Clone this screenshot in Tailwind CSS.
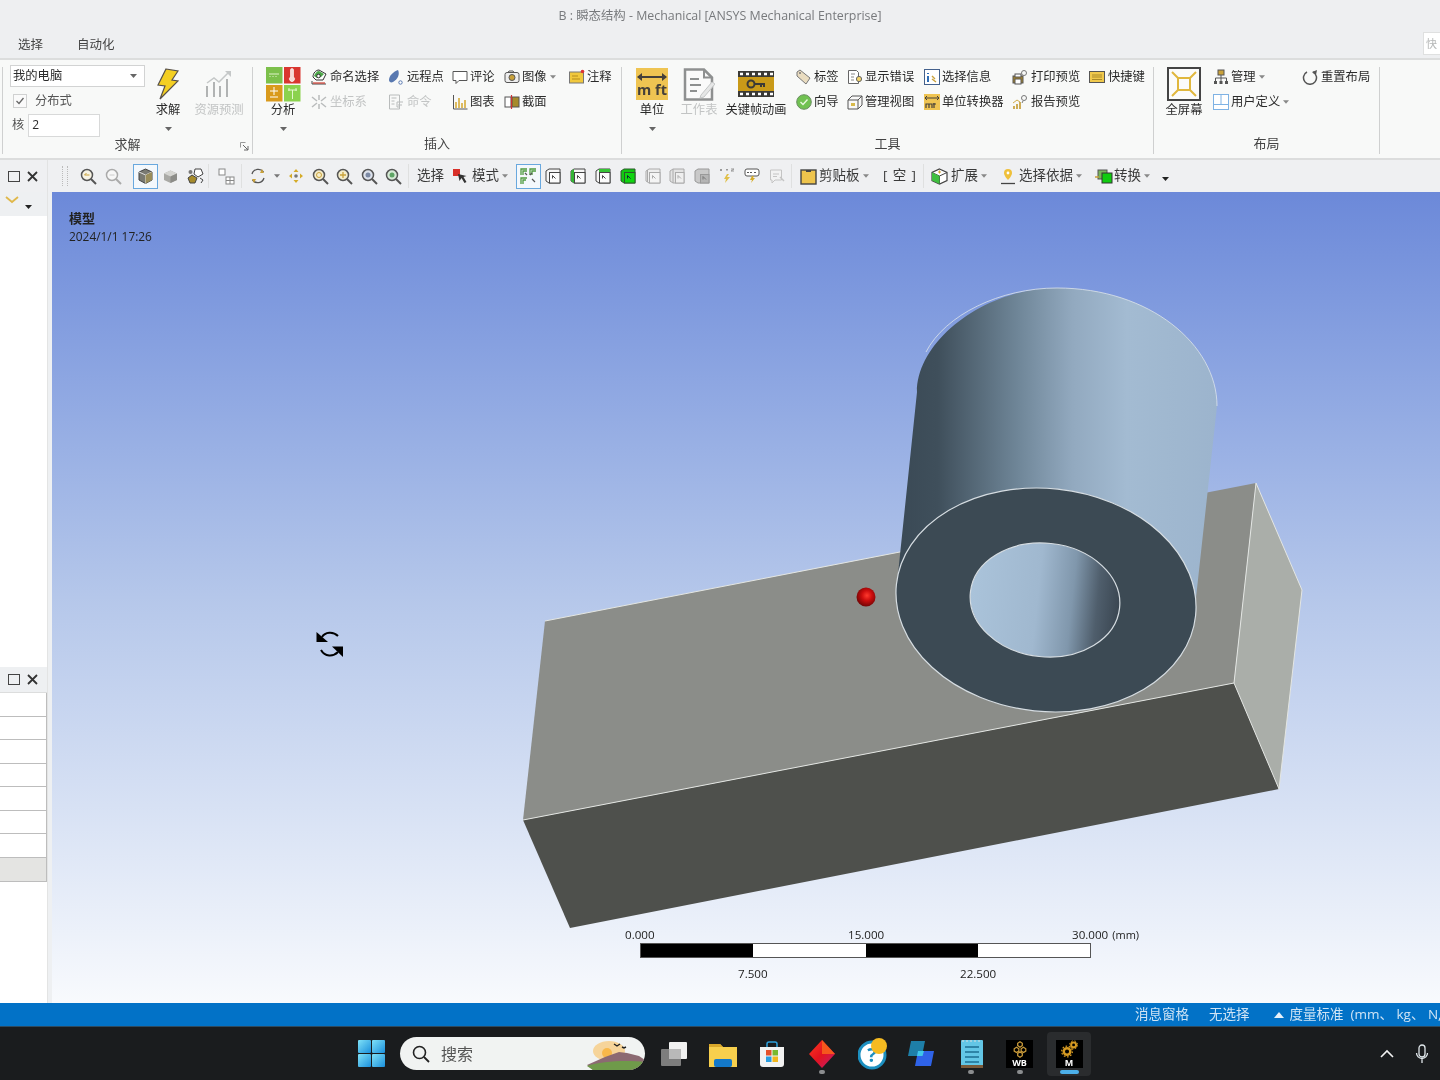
<!DOCTYPE html>
<html lang="zh-CN">
<head>
<meta charset="UTF-8">
<title>B : 瞬态结构 - Mechanical</title>
<script src="https://cdn.jsdelivr.net/npm/@tailwindcss/browser@4"></script>
</head>
<body class="bg-white">
<div class="w-[1440px] h-[1080px] overflow-hidden flex flex-col bg-[#eeeff1] text-[#2b2b2b] blur-[0.35px] font-['Open_Sans','Noto_Sans_CJK_SC',sans-serif]">

  <!-- title bar -->
  <div class="h-[32px] flex items-center justify-center text-[12.4px] text-[#77797c]">B : 瞬态结构 - Mechanical [ANSYS Mechanical Enterprise]</div>

  <!-- tabs -->
  <div class="h-[28px] flex items-center border-b-2 border-[#dcdddd] text-[12.5px] text-[#444]">
    <span class="ml-[18px] w-[26px] whitespace-nowrap">选择</span>
    <span class="ml-[33px] w-[37px] whitespace-nowrap">自动化</span>
    <div class="ml-auto self-start w-[17px] h-[23px] bg-white border border-[#dfe0e0] border-r-0 text-[11px] text-[#b5b7b7] pl-[2px] leading-[22px] overflow-hidden">快</div>
  </div>

  <!-- ribbon -->
  <div class="h-[100px] pt-[7px] bg-[#f8f9f8] border-b-2 border-[#dcdddd] flex text-[12.3px] leading-none">

    <!-- 求解 -->
    <div class="relative ml-[2px] w-[251px] h-[87px] border-x border-[#cfd0d0] flex flex-col justify-between">
      <div class="flex">
        <div class="ml-[7px] w-[135px] flex flex-col">
          <div class="h-[22px] -mt-[2px] bg-white border border-[#d2d3d3] flex items-center pl-[2px]">
            <span class="whitespace-nowrap">我的电脑</span>
            <svg class="ml-auto mr-[7px] w-[7px] h-[4px]" viewBox="0 0 7 4"><path d="M0 0h7L3.500 4z" fill="#666"/></svg>
          </div>
          <div class="mt-[4px] h-[20px] flex items-center pl-[3px]">
            <div class="w-[14px] h-[14px] border border-[#d0d1d1] bg-[#fafafa] flex items-center justify-center">
              <svg class="w-[10px] h-[10px]" viewBox="0 0 10 10"><path d="M1.500 5l2.500 2.500L8.500 2" fill="none" stroke="#666" stroke-width="1.300"/></svg>
            </div>
            <span class="ml-[8px] text-[#555]">分布式</span>
          </div>
          <div class="mt-[3px] h-[22px] flex items-center pl-[2px]">
            <span class="text-[#555]">核</span>
            <div class="ml-[4px] w-[72px] h-[23px] bg-white border border-[#d8d9d9] pl-[3px] flex items-center text-[12px]">2</div>
          </div>
        </div>
        <div class="ml-[5px] w-[36px] flex flex-col items-center">
          <div class="h-[36px] -mt-[1px] flex items-center justify-center">
            <svg class="w-[22px] h-[32px]" viewBox="0 0 22 32"><path d="M9 1l12 2-6 9 6 1L3 31l5-13-7-1z" fill="#f4cf22" stroke="#57504a" stroke-width="1.200"/></svg>
          </div>
          <span class="h-[16px] flex items-center whitespace-nowrap">求解</span>
          <svg class="mt-[9px] w-[7px] h-[4px]" viewBox="0 0 7 4"><path d="M0 0h7L3.500 4z" fill="#666"/></svg>
        </div>
        <div class="ml-[5px] w-[56px] flex flex-col items-center text-[#c2c4c4]">
          <div class="h-[36px] -mt-[1px] flex items-center justify-center">
            <svg class="w-[30px] h-[30px]" viewBox="0 0 30 30"><path d="M3 14l7-5 5 4 9-9" fill="none" stroke="#c5c8c8" stroke-width="1.500"/><path d="M21 2h6v6z" fill="#c5c8c8"/><path d="M3 17v11M10 13v15M16 17v11M23 10v18" stroke="#a9acac" stroke-width="1.800"/></svg>
          </div>
          <span class="h-[16px] flex items-center whitespace-nowrap">资源预测</span>
        </div>
      </div>
      <div class="h-[18px] mb-[2px] flex items-center justify-center text-[13px] text-[#444]">求解</div>
      <svg class="absolute right-[3px] bottom-[3px] w-[9px] h-[9px]" viewBox="0 0 9 9"><path d="M.500 .500h5M.500 .500v5" stroke="#999" fill="none"/><path d="M3 3l5 5M8 4v4H4" stroke="#666" fill="none"/></svg>
    </div>

    <!-- 插入 -->
    <div class="w-[369px] h-[87px] border-r border-[#cfd0d0] flex flex-col justify-between">
      <div class="flex">
        <div class="ml-[10px] w-[40px] flex flex-col items-center">
          <div class="h-[36px] -mt-[1px] flex items-center justify-center">
            <svg class="w-[35px] h-[35px]" viewBox="0 0 35 35">
              <rect x="0" y="0" width="16.500" height="16.500" fill="#7cc04b"/><path d="M3 7h10M4 9v1M7 9v1M10 9v1" stroke="#dff2c9"/>
              <rect x="18" y="0" width="16.500" height="16.500" fill="#d9362f"/><path d="M24.500 3a1.500 1.500 0 0 1 3 0v7a2.500 2.500 0 1 1-3 0z" fill="#f6d9d6" stroke="#fff" stroke-width="0.600"/>
              <rect x="0" y="18" width="16.500" height="16.500" fill="#d99a1c"/><path d="M4 24h8M8 20v8M4 30h8" stroke="#fff"/>
              <rect x="18" y="18" width="16.500" height="16.500" fill="#8bd24e"/><path d="M22 23h9M26.500 23v9M23 21v3M30 21v3" stroke="#e3f7cd"/>
            </svg>
          </div>
          <span class="h-[16px] flex items-center whitespace-nowrap">分析</span>
          <svg class="mt-[9px] w-[7px] h-[4px]" viewBox="0 0 7 4"><path d="M0 0h7L3.500 4z" fill="#666"/></svg>
        </div>
        <div class="ml-[8px] w-[69px] flex flex-col gap-[5px]">
          <div class="h-[20px] flex items-center gap-[3px]">
            <svg class="w-[16px] h-[16px] shrink-0" viewBox="0 0 16 16"><path d="M1 15h14M1 15v-3" stroke="#444" fill="none"/><path d="M2 14h12" stroke="#d23b30" stroke-width="1.200"/><path d="M2 8C2 4 5 1 8 1l7 4-3 6H5z" fill="#fff" stroke="#333"/><path d="M3 7C4 4 6 2 8 2l5 3-3 3-4 1z" fill="#4da84a"/><circle cx="7.500" cy="7" r="1.800" fill="#fff" stroke="#333"/></svg>
            <span class="whitespace-nowrap">命名选择</span>
          </div>
          <div class="h-[20px] flex items-center gap-[3px] text-[#c2c4c4]">
            <svg class="w-[16px] h-[16px] shrink-0" viewBox="0 0 16 16"><path d="M8 1v5M8 10v5M1 3l5 4M10 9l5 4M1 13l5-4M10 7l5-4" stroke="#b9bcbc" stroke-width="1.500"/></svg>
            <span class="whitespace-nowrap">坐标系</span>
          </div>
        </div>
        <div class="ml-[8px] w-[56px] flex flex-col gap-[5px]">
          <div class="h-[20px] flex items-center gap-[3px]">
            <svg class="w-[16px] h-[16px] shrink-0" viewBox="0 0 16 16"><path d="M1 11C1 7 5 3 10 1c2 4 0 9-5 12-2 1-4 0-4-2z" fill="#5878b0"/><circle cx="12.500" cy="13.500" r="1.700" fill="#fff" stroke="#5878b0"/></svg>
            <span class="whitespace-nowrap">远程点</span>
          </div>
          <div class="h-[20px] flex items-center gap-[3px] text-[#c2c4c4]">
            <svg class="w-[16px] h-[16px] shrink-0" viewBox="0 0 16 16"><path d="M1.500 1h10v14h-10zM3.500 4h5M3.500 7h3M3.500 10h3" fill="none" stroke="#b9bcbc"/><path d="M9 8h6M10 11h4M9 8v5h3" fill="none" stroke="#b9bcbc"/></svg>
            <span class="whitespace-nowrap">命令</span>
          </div>
        </div>
        <div class="ml-[8px] w-[44px] flex flex-col gap-[5px]">
          <div class="h-[20px] flex items-center gap-[2px]">
            <svg class="w-[16px] h-[16px] shrink-0" viewBox="0 0 16 16"><path d="M1 2.500h14v9H7l-3 3v-3H1z" fill="#fff" stroke="#555"/></svg>
            <span class="whitespace-nowrap">评论</span>
          </div>
          <div class="h-[20px] flex items-center gap-[2px]">
            <svg class="w-[16px] h-[16px] shrink-0" viewBox="0 0 16 16"><path d="M1.500 1v14h14" fill="none" stroke="#555"/><path d="M4 14V8M7 14V4M10 14V9M13 14V6" stroke="#d4a72c" stroke-width="1.500"/></svg>
            <span class="whitespace-nowrap">图表</span>
          </div>
        </div>
        <div class="ml-[8px] w-[57px] flex flex-col gap-[5px]">
          <div class="h-[20px] flex items-center gap-[2px]">
            <svg class="w-[16px] h-[16px] shrink-0" viewBox="0 0 16 16"><rect x="1" y="3.500" width="14" height="10" rx="2" fill="#eee" stroke="#555"/><path d="M4 3.500l1-1.500h4l1 1.500" fill="none" stroke="#555"/><circle cx="8" cy="8.500" r="3" fill="#c9a13a" stroke="#555"/></svg>
            <span class="whitespace-nowrap">图像</span>
            <svg class="ml-[1px] w-[6px] h-[4px]" viewBox="0 0 7 4"><path d="M0 0h7L3.500 4z" fill="#888"/></svg>
          </div>
          <div class="h-[20px] flex items-center gap-[2px]">
            <svg class="w-[16px] h-[16px] shrink-0" viewBox="0 0 16 16"><rect x="1" y="3" width="6" height="10" fill="#fff" stroke="#555"/><rect x="8" y="3" width="7" height="10" fill="#a68b2c" stroke="#555"/><path d="M7.500 1v14" stroke="#c33" stroke-width="1.200"/></svg>
            <span class="whitespace-nowrap">截面</span>
          </div>
        </div>
        <div class="ml-[8px] flex flex-col">
          <div class="h-[20px] flex items-center gap-[2px]">
            <svg class="w-[16px] h-[16px] shrink-0" viewBox="0 0 16 16"><rect x="0.500" y="3" width="14" height="11" fill="#f1c83c" stroke="#777"/><path d="M3 7h6M3 10h8" stroke="#b58d1d"/><circle cx="13.500" cy="2.500" r="1.800" fill="#d33"/></svg>
            <span class="whitespace-nowrap">注释</span>
          </div>
        </div>
      </div>
      <div class="h-[18px] mb-[2px] flex items-center justify-center text-[13px] text-[#444]">插入</div>
    </div>

    <!-- 工具 -->
    <div class="w-[532px] h-[87px] border-r border-[#cfd0d0] flex flex-col justify-between">
      <div class="flex">
        <div class="ml-[12px] w-[36px] flex flex-col items-center">
          <div class="h-[36px] -mt-[1px] flex items-center justify-center">
            <svg class="w-[32px] h-[32px]" viewBox="0 0 32 32"><rect width="32" height="32" fill="#efc452"/><path d="M2 9h28" stroke="#45403a" stroke-width="2"/><path d="M6 5L1 9l5 4zM26 5l5 4-5 4z" fill="#45403a"/><text x="16" y="27" text-anchor="middle" font-size="14.500" font-weight="700" fill="#45403a">m ft</text></svg>
          </div>
          <span class="h-[16px] flex items-center whitespace-nowrap">单位</span>
          <svg class="mt-[9px] w-[7px] h-[4px]" viewBox="0 0 7 4"><path d="M0 0h7L3.500 4z" fill="#666"/></svg>
        </div>
        <div class="ml-[9px] w-[40px] flex flex-col items-center text-[#c2c4c4]">
          <div class="h-[36px] -mt-[1px] flex items-center justify-center">
            <svg class="w-[32px] h-[33px]" viewBox="0 0 32 33"><path d="M2 1.500h19l8 8v22H2z" fill="#fafafa" stroke="#8e9090" stroke-width="2.500"/><path d="M21 1.500v8h8" fill="none" stroke="#8e9090" stroke-width="2"/><path d="M7 11h9M7 17h11M7 23h7" stroke="#8e9090" stroke-width="2"/><path d="M18 27l11-13 3 2-11 13-4 1z" fill="#e6e7e7" stroke="#c4c6c6"/></svg>
          </div>
          <span class="h-[16px] flex items-center whitespace-nowrap">工作表</span>
        </div>
        <div class="ml-[5px] w-[64px] flex flex-col items-center">
          <div class="h-[36px] -mt-[1px] flex items-center justify-center">
            <svg class="w-[36px] h-[26px]" viewBox="0 0 36 26"><rect width="36" height="26" fill="#3b3a36"/><rect y="6" width="36" height="14" fill="#c99a18"/><path d="M2 3h3M8 3h3M14 3h3M20 3h3M26 3h3M32 3h3M2 23h3M8 23h3M14 23h3M20 23h3M26 23h3M32 23h3" stroke="#fff" stroke-width="2.500"/><circle cx="13" cy="13" r="3.500" fill="none" stroke="#3b3a36" stroke-width="2"/><path d="M16 13h11M23 13v3M26 13v3" stroke="#3b3a36" stroke-width="2"/></svg>
          </div>
          <span class="h-[16px] flex items-center whitespace-nowrap text-[12.2px]">关键帧动画</span>
        </div>
        <div class="ml-[8px] w-[43px] flex flex-col gap-[5px]">
          <div class="h-[20px] flex items-center gap-[2px]">
            <svg class="w-[16px] h-[16px] shrink-0" viewBox="0 0 16 16"><path d="M1 3l3-2 10 8-4 6L1 7z" fill="#e9dcc0" stroke="#777"/><circle cx="4" cy="4" r="1" fill="#777"/></svg>
            <span class="whitespace-nowrap">标签</span>
          </div>
          <div class="h-[20px] flex items-center gap-[2px]">
            <svg class="w-[16px] h-[16px] shrink-0" viewBox="0 0 16 16"><circle cx="8" cy="8" r="7.300" fill="#71c252" stroke="#6b8f62"/><path d="M4.500 8l2.500 2.500 4.500-5" fill="none" stroke="#e8f8df" stroke-width="1.400"/></svg>
            <span class="whitespace-nowrap">向导</span>
          </div>
        </div>
        <div class="ml-[8px] w-[69px] flex flex-col gap-[5px]">
          <div class="h-[20px] flex items-center gap-[2px]">
            <svg class="w-[16px] h-[16px] shrink-0" viewBox="0 0 16 16"><path d="M1.500 1.500h8l2 2v11h-10z" fill="#fff" stroke="#666"/><path d="M4 5h4M4 8h3M4 11h3" stroke="#888"/><circle cx="12" cy="10" r="2.600" fill="#f3d36b" stroke="#666"/></svg>
            <span class="whitespace-nowrap">显示错误</span>
          </div>
          <div class="h-[20px] flex items-center gap-[2px]">
            <svg class="w-[16px] h-[16px] shrink-0" viewBox="0 0 16 16"><path d="M1 6h10v9H1zM1 6l4-4h10l-4 4M11 15l4-4V2" fill="#f8f8f8" stroke="#555"/><rect x="4" y="9" width="4" height="3" fill="#d7b94b"/></svg>
            <span class="whitespace-nowrap">管理视图</span>
          </div>
        </div>
        <div class="ml-[8px] w-[80px] flex flex-col gap-[5px]">
          <div class="h-[20px] flex items-center gap-[2px]">
            <svg class="w-[16px] h-[16px] shrink-0" viewBox="0 0 16 16"><rect x="0.500" y="0.500" width="15" height="15" fill="#fff" stroke="#44618c"/><path d="M4 4v1M4 7v6" stroke="#2e6db5" stroke-width="2"/><path d="M8 7l3 3M8 10l4 3" stroke="#c9a13a" stroke-width="1.400"/></svg>
            <span class="whitespace-nowrap">选择信息</span>
          </div>
          <div class="h-[20px] flex items-center gap-[2px]">
            <svg class="w-[16px] h-[16px] shrink-0" viewBox="0 0 16 16"><rect width="16" height="16" fill="#efc452"/><path d="M1 4h14M1 4l2-2M1 4l2 2M15 4l-2-2M15 4l-2 2" stroke="#45403a"/><path d="M2 14v-4h3v4M5 10h3v4M10 14V9M9 10h3" fill="none" stroke="#45403a" stroke-width="1.200"/></svg>
            <span class="whitespace-nowrap">单位转换器</span>
          </div>
        </div>
        <div class="ml-[8px] w-[69px] flex flex-col gap-[5px]">
          <div class="h-[20px] flex items-center gap-[3px]">
            <svg class="w-[16px] h-[16px] shrink-0" viewBox="0 0 16 16"><rect x="1" y="7" width="10" height="7" fill="#a8872c" stroke="#555"/><rect x="3" y="10" width="6" height="5" fill="#fff" stroke="#555"/><rect x="3" y="5" width="6" height="3" fill="#fff" stroke="#555"/><circle cx="12" cy="4" r="2.500" fill="none" stroke="#777"/></svg>
            <span class="whitespace-nowrap">打印预览</span>
          </div>
          <div class="h-[20px] flex items-center gap-[3px]">
            <svg class="w-[16px] h-[16px] shrink-0" viewBox="0 0 16 16"><path d="M2 15v-3M5 15v-5M8 15v-7" stroke="#c39a2f" stroke-width="1.600"/><path d="M1 9l4-3 3 2" fill="none" stroke="#d0ac4c"/><circle cx="12" cy="4" r="2.500" fill="none" stroke="#777"/><path d="M11 7l-1 2" stroke="#777"/></svg>
            <span class="whitespace-nowrap">报告预览</span>
          </div>
        </div>
        <div class="ml-[8px] flex flex-col">
          <div class="h-[20px] flex items-center gap-[3px]">
            <svg class="w-[16px] h-[16px] shrink-0" viewBox="0 0 16 16"><rect x="0.500" y="2.500" width="15" height="11" fill="#f0c94d" stroke="#555"/><path d="M3 6h10M3 8h10M3 10.500h10" stroke="#aa8a28"/></svg>
            <span class="whitespace-nowrap">快捷键</span>
          </div>
        </div>
      </div>
      <div class="h-[18px] mb-[2px] flex items-center justify-center text-[13px] text-[#444]">工具</div>
    </div>

    <!-- 布局 -->
    <div class="w-[226px] h-[87px] border-r border-[#cfd0d0] flex flex-col justify-between">
      <div class="flex">
        <div class="ml-[10px] w-[40px] flex flex-col items-center">
          <div class="h-[36px] -mt-[1px] flex items-center justify-center">
            <svg class="w-[34px] h-[34px]" viewBox="0 0 34 34"><rect x="1" y="1" width="32" height="32" fill="#fbfbfb" stroke="#444" stroke-width="2"/><path d="M11 11h12v12H11zM5 5l6 6M29 5l-6 6M5 29l6-6M29 29l-6-6" fill="none" stroke="#e0b73e" stroke-width="2"/></svg>
          </div>
          <span class="h-[16px] flex items-center whitespace-nowrap">全屏幕</span>
        </div>
        <div class="ml-[9px] w-[80px] flex flex-col gap-[5px]">
          <div class="h-[20px] flex items-center gap-[2px]">
            <svg class="w-[16px] h-[16px] shrink-0" viewBox="0 0 16 16"><rect x="5" y="1" width="6" height="5" fill="#c9a13a" stroke="#555"/><path d="M8 6v3M2.500 12V9h11v3M8 9v3" fill="none" stroke="#555"/><rect x="1" y="12" width="3" height="3" fill="#555"/><rect x="6.500" y="12" width="3" height="3" fill="#555"/><rect x="12" y="12" width="3" height="3" fill="#555"/></svg>
            <span class="whitespace-nowrap">管理</span>
            <svg class="ml-[1px] w-[6px] h-[4px]" viewBox="0 0 7 4"><path d="M0 0h7L3.500 4z" fill="#888"/></svg>
          </div>
          <div class="h-[20px] flex items-center gap-[2px]">
            <svg class="w-[16px] h-[16px] shrink-0" viewBox="0 0 16 16"><rect x="0.500" y="0.500" width="15" height="15" fill="#fff" stroke="#7eb2e4"/><path d="M0 10.500h16M8 0v10.500" stroke="#7eb2e4"/></svg>
            <span class="whitespace-nowrap">用户定义</span>
            <svg class="ml-[1px] w-[6px] h-[4px]" viewBox="0 0 7 4"><path d="M0 0h7L3.500 4z" fill="#888"/></svg>
          </div>
        </div>
        <div class="ml-[9px] flex flex-col">
          <div class="h-[20px] flex items-center gap-[3px]">
            <svg class="w-[16px] h-[16px] shrink-0" viewBox="0 0 16 16"><path d="M5 3a6.500 6.500 0 1 0 6 0" fill="none" stroke="#555" stroke-width="1.500"/><path d="M15 1l-1 5-4-3z" fill="#555"/></svg>
            <span class="whitespace-nowrap">重置布局</span>
          </div>
        </div>
      </div>
      <div class="h-[18px] mb-[2px] flex items-center justify-center text-[13px] text-[#444]">布局</div>
    </div>
  </div>

  <!-- toolbar -->
  <div class="h-[32px] flex items-center bg-[#eff0f2] text-[13.5px] leading-none text-[#3a3a3a]">
    <div class="w-[48px] h-full flex items-center pl-[8px] border-r border-[#e2e3e3]">
      <div class="w-[12px] h-[11px] border-[1.500px] border-[#444]"></div>
      <svg class="ml-[7px] w-[11px] h-[11px]" viewBox="0 0 11 11"><path d="M1 1l9 9M10 1l-9 9" stroke="#333" stroke-width="1.800"/></svg>
    </div>
    <div class="ml-[14px] w-[6px] h-[20px] border-x border-dotted border-[#bbb]"></div>
    <div class="ml-[8px] w-[25px] flex justify-center"><svg class="w-[17px] h-[17px]" viewBox="0 0 17 17"><circle cx="7" cy="7" r="5.500" fill="#f7f3e4" stroke="#555" stroke-width="1.500"/><path d="M11 11l5 5" stroke="#555" stroke-width="2"/><path d="M4.500 7h5M4.500 7l2-2" stroke="#c9a13a" fill="none"/></svg></div>
    <div class="w-[25px] flex justify-center"><svg class="w-[17px] h-[17px]" viewBox="0 0 17 17"><circle cx="7" cy="7" r="5.500" fill="#f7f7f7" stroke="#aaa" stroke-width="1.500"/><path d="M11 11l5 5" stroke="#aaa" stroke-width="2"/><path d="M4.500 7h5" stroke="#ccc"/></svg></div>
    <div class="ml-[7px] w-[25px] h-[25px] border border-[#69a8de] bg-[#f4f8fc] flex items-center justify-center"><svg class="w-[15px] h-[16px]" viewBox="0 0 15 16"><path d="M7.500 1L14 4v8l-6.500 3.500L1 12V4z" fill="#7a7a72" stroke="#444"/><path d="M1 4l6.500 3L14 4M7.500 7v8.500" fill="none" stroke="#ddd"/><path d="M7.500 7L14 4v8l-6.500 3.500z" fill="#9a8d5a"/></svg></div>
    <div class="w-[25px] flex justify-center"><svg class="w-[15px] h-[15px]" viewBox="0 0 15 15"><path d="M7.500 1.500L14 4.500v6.500L7.500 14 1 11V4.500z" fill="#a9a9a5"/><path d="M1 4.500l6.500 3L14 4.500 7.500 1.500z" fill="#d5d5d2"/><path d="M7.500 7.500L14 4.500V11L7.500 14z" fill="#8c8c88"/></svg></div>
    <div class="w-[25px] flex justify-center"><svg class="w-[17px] h-[16px]" viewBox="0 0 17 16"><path d="M8 1h6l2 5-5 3-4-3z" fill="#fff" stroke="#444"/><path d="M1 10l4-3 5 3-2 5H3z" fill="#a68b2c" stroke="#444"/><circle cx="3.500" cy="4" r="2" fill="#777"/><path d="M13 10l3 2-2 3" fill="none" stroke="#444"/></svg></div>
    <div class="w-[1px] h-[24px] bg-[#dfe0e0]"></div>
    <div class="ml-[5px] w-[25px] flex justify-center"><svg class="w-[17px] h-[17px]" viewBox="0 0 17 17"><rect x="1" y="1" width="6" height="6" fill="#fff" stroke="#888"/><rect x="8" y="9" width="8" height="7" fill="#fff" stroke="#888"/><path d="M12 9v7M8 12.500h8" stroke="#888"/></svg></div>
    <div class="ml-[2px] w-[1px] h-[24px] bg-[#dfe0e0]"></div>
    <div class="ml-[3px] w-[25px] flex justify-center"><svg class="w-[16px] h-[16px]" viewBox="0 0 16 16"><path d="M2 6a6.500 6.500 0 0 1 11.500-2M14 10a6.500 6.500 0 0 1-11.500 2" fill="none" stroke="#555" stroke-width="1.300"/><path d="M12 1l2 4-4 0z" fill="#c9a13a"/><path d="M4 15l-2-4 4 0z" fill="#c9a13a"/></svg></div>
    <div class="w-[13px] flex justify-center"><svg class="w-[6px] h-[4px]" viewBox="0 0 7 4"><path d="M0 0h7L3.500 4z" fill="#777"/></svg></div>
    <div class="w-[25px] flex justify-center"><svg class="w-[16px] h-[16px]" viewBox="0 0 16 16"><path d="M8 1l2.500 3h-5zM8 15l-2.500-3h5zM1 8l3-2.500v5zM15 8l-3 2.500v-5z" fill="#d5ac2a"/><circle cx="8" cy="8" r="1.800" fill="#777"/></svg></div>
    <div class="w-[24.500px] flex justify-center"><svg class="w-[17px] h-[17px]" viewBox="0 0 17 17"><circle cx="7" cy="7" r="5.500" fill="#f5edcb" stroke="#555" stroke-width="1.500"/><path d="M11 11l5 5" stroke="#555" stroke-width="2"/><circle cx="7" cy="7" r="2.500" fill="none" stroke="#c9a13a"/></svg></div>
    <div class="w-[24.500px] flex justify-center"><svg class="w-[17px] h-[17px]" viewBox="0 0 17 17"><circle cx="7" cy="7" r="5.500" fill="#f5edcb" stroke="#555" stroke-width="1.500"/><path d="M11 11l5 5" stroke="#555" stroke-width="2"/><path d="M4 7h6M7 4v6" stroke="#c9a13a" stroke-width="1.300"/></svg></div>
    <div class="w-[24.500px] flex justify-center"><svg class="w-[17px] h-[17px]" viewBox="0 0 17 17"><circle cx="7" cy="7" r="5.500" fill="#dde2ec" stroke="#555" stroke-width="1.500"/><path d="M11 11l5 5" stroke="#555" stroke-width="2"/><circle cx="7" cy="7" r="2.500" fill="#7c8aa5"/></svg></div>
    <div class="w-[24.500px] flex justify-center"><svg class="w-[17px] h-[17px]" viewBox="0 0 17 17"><circle cx="7" cy="7" r="5.500" fill="#d7ead7" stroke="#555" stroke-width="1.500"/><path d="M11 11l5 5" stroke="#555" stroke-width="2"/><circle cx="7" cy="7" r="2.500" fill="#5ea565"/></svg></div>
    <div class="ml-[2px] w-[1px] h-[24px] bg-[#dfe0e0]"></div>
    <span class="ml-[8px] w-[27px] whitespace-nowrap">选择</span>
    <svg class="ml-[8px] w-[16px] h-[16px]" viewBox="0 0 16 16"><rect x="1" y="1" width="7" height="7" fill="#d8302a"/><path d="M6 6l1.500 7 2-3 3 5 2-1-3-5 3-1z" fill="#333"/></svg>
    <span class="ml-[4px] w-[27px] whitespace-nowrap">模式</span>
    <svg class="ml-[3px] w-[6px] h-[4px]" viewBox="0 0 7 4"><path d="M0 0h7L3.500 4z" fill="#888"/></svg>
    <div class="ml-[8px] w-[25px] h-[25px] border border-[#69a8de] bg-[#f4f8fc] flex items-center justify-center"><svg class="w-[17px] h-[17px]" viewBox="0 0 17 17"><path d="M1 7V1h6M3 7V3h4M10 7V1h6M12 7V3h4M1 16v-6h6M3 16v-4h3" fill="none" stroke="#4f9a3f" stroke-width="1.300"/><path d="M5 5l2 2M12 5l-2 2M12 11l3 3" stroke="#555" stroke-width="1.200"/></svg></div>
    <div class="w-[24.800px] flex justify-center"><svg class="w-[16px] h-[16px]" viewBox="0 0 16 16"><path d="M1 3L4 1h11v14H4l-3-2z" fill="#f6f6f6" stroke="#444"/><rect x="4.500" y="4.500" width="10.500" height="10.500" fill="#fbfbfb" stroke="#444"/><path d="M7.500 7.500l3 3M7.500 7.500v3" stroke="#444"/></svg></div>
    <div class="w-[24.800px] flex justify-center"><svg class="w-[16px] h-[16px]" viewBox="0 0 16 16"><path d="M1 3L4 1h11v14H4l-3-2z" fill="#f6f6f6" stroke="#444"/><path d="M1 3L4 1v14l-3-2z" fill="#35b535"/><rect x="4.500" y="4.500" width="10.500" height="10.500" fill="#fbfbfb" stroke="#444"/><path d="M7.500 7.500l3 3M7.500 7.500v3" stroke="#444"/></svg></div>
    <div class="w-[24.800px] flex justify-center"><svg class="w-[16px] h-[16px]" viewBox="0 0 16 16"><path d="M1 3L4 1h11v14H4l-3-2z" fill="#f6f6f6" stroke="#444"/><path d="M4 1h11v3.500H4z" fill="#35c435"/><rect x="4.500" y="4.500" width="10.500" height="10.500" fill="#fbfbfb" stroke="#444"/><path d="M7.500 7.500l3 3M7.500 7.500v3" stroke="#444"/></svg></div>
    <div class="w-[24.800px] flex justify-center"><svg class="w-[16px] h-[16px]" viewBox="0 0 16 16"><path d="M1 3L4 1h11v14H4l-3-2z" fill="#12c712" stroke="#2a5a2a"/><rect x="4.500" y="4.500" width="10.500" height="10.500" fill="#0fd60f" stroke="#2a5a2a"/><path d="M7.500 7.500l3 3M7.500 7.500v3" stroke="#123"/></svg></div>
    <div class="w-[24.800px] flex justify-center"><svg class="w-[16px] h-[16px]" viewBox="0 0 16 16"><path d="M1 3L4 1h11v14H4l-3-2z" fill="#eee" stroke="#aaa"/><rect x="4.500" y="4.500" width="10.500" height="10.500" fill="#f4f4f4" stroke="#aaa"/><path d="M2.500 2v12M7.500 7.500l3 3M7.500 7.500v3" stroke="#aaa"/></svg></div>
    <div class="w-[24.800px] flex justify-center"><svg class="w-[16px] h-[16px]" viewBox="0 0 16 16"><path d="M1 3L4 1h11v14H4l-3-2z" fill="#e3e3e3" stroke="#aaa"/><rect x="6.500" y="4.500" width="8.500" height="10.500" fill="#efefef" stroke="#aaa"/><path d="M4 1v14M9 7.500l3 3M9 7.500v3" stroke="#aaa"/></svg></div>
    <div class="w-[24.800px] flex justify-center"><svg class="w-[16px] h-[16px]" viewBox="0 0 16 16"><path d="M1 3L4 1h11v14H4l-3-2z" fill="#c9c9c9" stroke="#999"/><rect x="6.500" y="6.500" width="8.500" height="8.500" fill="#b5b5b5" stroke="#999"/><path d="M9 8.500l3 3M9 8.500v3" stroke="#777"/></svg></div>
    <div class="w-[24.800px] flex justify-center"><svg class="w-[16px] h-[16px]" viewBox="0 0 16 16"><path d="M1 1l2 2M3 1L1 3M7 1l1 1 1-1M8 2v1M12 1h3l-3 2h3" stroke="#999" fill="none"/><path d="M8 6l-3 5 2 0-1 4 5-6H8l2-3z" fill="#e0c04a"/></svg></div>
    <div class="w-[24.800px] flex justify-center"><svg class="w-[16px] h-[16px]" viewBox="0 0 16 16"><rect x="1" y="1" width="14" height="7" rx="2" fill="#fff" stroke="#555"/><path d="M3 4.500h2M6 4.500h2M10 4.500h2" stroke="#555"/><path d="M8 8l-2 4 2 0-1 3 4-5H9l1-2z" fill="#d5ac2a"/></svg></div>
    <div class="w-[24.800px] flex justify-center"><svg class="w-[16px] h-[16px]" viewBox="0 0 16 16"><path d="M1.500 2h11v10H6l-3 3v-3H1.500z" fill="#f2f2f2" stroke="#c4c4c4"/><path d="M4 6h6M4 8.500h4" stroke="#c4c4c4"/><path d="M11 9l4 4" stroke="#c4c4c4" stroke-width="1.500"/></svg></div>
    <div class="ml-[2px] w-[1px] h-[24px] bg-[#dfe0e0]"></div>
    <svg class="ml-[8px] w-[17px] h-[17px]" viewBox="0 0 17 17"><rect x="1" y="2" width="15" height="14" fill="#eec44c" stroke="#444" stroke-width="1.400"/><path d="M6 2h5v2H6z" fill="#444"/></svg>
    <span class="ml-[2px] w-[41px] whitespace-nowrap">剪贴板</span>
    <svg class="ml-[3px] w-[6px] h-[4px]" viewBox="0 0 7 4"><path d="M0 0h7L3.500 4z" fill="#888"/></svg>
    <span class="ml-[14px] w-[33px] whitespace-nowrap flex justify-between"><span>[</span><span>空</span><span>]</span></span>
    <div class="ml-[7px] w-[1px] h-[24px] bg-[#dfe0e0]"></div>
    <svg class="ml-[7px] w-[17px] h-[17px]" viewBox="0 0 17 17"><path d="M8.500 1L16 4.500v8L8.500 16 1 12.500v-8z" fill="#fff" stroke="#444" stroke-width="1.200"/><path d="M1 4.500l7.500 3.500L16 4.500M8.500 8v8" fill="none" stroke="#444"/><path d="M1 4.500L8.500 8v8L1 12.500z" fill="#3fbf3f"/><path d="M8.500 2.500v3M7 4h3" stroke="#d8a528"/></svg>
    <span class="ml-[3px] w-[27px] whitespace-nowrap">扩展</span>
    <svg class="ml-[3px] w-[6px] h-[4px]" viewBox="0 0 7 4"><path d="M0 0h7L3.500 4z" fill="#888"/></svg>
    <svg class="ml-[13px] w-[16px] h-[17px]" viewBox="0 0 16 17"><path d="M8 1a4 4 0 0 1 4 4c0 3-4 7-4 7S4 8 4 5a4 4 0 0 1 4-4z" fill="#efc03b"/><circle cx="8" cy="5" r="1.400" fill="#fff"/><path d="M1 15.500h14" stroke="#444" stroke-width="1.300"/></svg>
    <span class="ml-[3px] w-[54px] whitespace-nowrap">选择依据</span>
    <svg class="ml-[3px] w-[6px] h-[4px]" viewBox="0 0 7 4"><path d="M0 0h7L3.500 4z" fill="#888"/></svg>
    <svg class="ml-[13px] w-[18px] h-[15px]" viewBox="0 0 18 15"><rect x="3" y="1" width="9" height="9" fill="#7ab55c" stroke="#555"/><rect x="7" y="4" width="10" height="10" fill="#10cc10" stroke="#333"/><path d="M0 8h4" stroke="#c9a13a" stroke-width="1.500"/></svg>
    <span class="ml-[1px] w-[27px] whitespace-nowrap">转换</span>
    <svg class="ml-[3px] w-[6px] h-[4px]" viewBox="0 0 7 4"><path d="M0 0h7L3.500 4z" fill="#888"/></svg>
    <svg class="ml-[12px] mt-[6px] w-[7px] h-[4px]" viewBox="0 0 7 4"><path d="M0 0h7L3.500 4z" fill="#222"/></svg>
  </div>

  <!-- main -->
  <div class="h-[811px] flex">
    <div class="w-[52px] bg-[#eef0f2] flex flex-col">
      <div class="w-[48px] flex flex-col h-full border-r border-[#e3e4e4]">
        <div class="h-[24px] flex items-start pl-[5px] pt-[4px]">
          <svg class="w-[14px] h-[8px]" viewBox="0 0 14 8"><path d="M1 1l6 5 6-5" fill="none" stroke="#e0b84a" stroke-width="1.800"/></svg>
          <svg class="ml-[6px] mt-[9px] w-[7px] h-[4px]" viewBox="0 0 7 4"><path d="M0 0h7L3.500 4z" fill="#222"/></svg>
        </div>
        <div class="h-[451px] bg-white"></div>
        <div class="h-[26px] flex items-center pl-[8px] border-b border-[#dcdddd]">
          <div class="w-[12px] h-[11px] border-[1.500px] border-[#444]"></div>
          <svg class="ml-[7px] w-[11px] h-[11px]" viewBox="0 0 11 11"><path d="M1 1l9 9M10 1l-9 9" stroke="#333" stroke-width="1.800"/></svg>
        </div>
        <div class="h-[23.500px] bg-white border-b border-r border-[#bdbdbd]"></div>
        <div class="h-[23.500px] bg-white border-b border-r border-[#bdbdbd]"></div>
        <div class="h-[23.500px] bg-white border-b border-r border-[#bdbdbd]"></div>
        <div class="h-[23.500px] bg-white border-b border-r border-[#bdbdbd]"></div>
        <div class="h-[23.500px] bg-white border-b border-r border-[#bdbdbd]"></div>
        <div class="h-[23.500px] bg-white border-b border-r border-[#bdbdbd]"></div>
        <div class="h-[23.500px] bg-white border-b border-r border-[#bdbdbd]"></div>
        <div class="h-[24px] bg-[#e4e4e2] border-b border-r border-[#bdbdbd]"></div>
        <div class="flex-1 bg-white"></div>
      </div>
    </div>

    <!-- graphics viewport -->
    <div class="relative flex-1 overflow-hidden bg-gradient-to-b from-[#6c89d9] via-[#b5c7ea] via-50% to-[#f8fafd] text-[11.6px] text-[#222] leading-none">
      <svg class="absolute left-0 top-0 w-[1388px] h-[811px]" viewBox="52 192 1388 811">
        <defs>
          <linearGradient id="body" gradientUnits="userSpaceOnUse" x1="896" y1="0" x2="1217" y2="0">
            <stop offset="0" stop-color="#3a4955"/><stop offset="0.13" stop-color="#3f4f5b"/><stop offset="0.38" stop-color="#6f8698"/><stop offset="0.55" stop-color="#92a9bf"/><stop offset="0.72" stop-color="#a3bbd2"/><stop offset="1" stop-color="#9cb4cd"/>
          </linearGradient>
          <linearGradient id="bore" gradientUnits="userSpaceOnUse" x1="970" y1="0" x2="1120" y2="0">
            <stop offset="0" stop-color="#aac3da"/><stop offset="0.45" stop-color="#a0b8cf"/><stop offset="0.68" stop-color="#8097ac"/><stop offset="0.85" stop-color="#4f5e6c"/><stop offset="1" stop-color="#3a4651"/>
          </linearGradient>
          <radialGradient id="ball" cx="0.550" cy="0.420" r="0.600">
            <stop offset="0" stop-color="#ff3a2e"/><stop offset="0.45" stop-color="#cc0d0d"/><stop offset="1" stop-color="#6e0505"/>
          </radialGradient>
        </defs>
        <path d="M545 621L1256 483L1234 683L523 820Z" fill="#8b8d89"/>
        <path d="M1256 483L1302 590L1279 789L1234 683Z" fill="#aaaea9"/>
        <path d="M523 820L1234 683L1279 789L570 928Z" fill="#4e504c"/>
        <path d="M545 621L905 551M1256 483L1302 590L1279 789M1256 483L1234 683L1279 789M523 820L1234 683" fill="none" stroke="#e4e6e2" stroke-width="1"/>
        <path d="M896 593L917 392C917 340 985 288 1057 288C1150 288 1217 345 1217 406L1195 607Z" fill="url(#body)"/>
        <path d="M926 352C945 315 1000 288 1057 288C1150 288 1217 345 1217 406" fill="none" stroke="#dde4ea" stroke-width="0.800"/>
        <ellipse cx="1046" cy="600" rx="150.400" ry="111.500" transform="rotate(6 1046 600)" fill="#3c4a54" stroke="#d6dde2" stroke-width="1.200"/>
        <ellipse cx="1045" cy="600" rx="75" ry="56.800" transform="rotate(6 1045 600)" fill="url(#bore)" stroke="#d6dde2" stroke-width="1.200"/>
        <circle cx="866" cy="597" r="9.500" fill="url(#ball)"/>
      </svg>

      <div class="absolute left-[17px] top-[20px]">
        <div class="font-bold text-[13px]">模型</div>
        <div class="mt-[6px] text-[11.900px]">2024/1/1 17:26</div>
      </div>

      <svg class="absolute left-[264px] top-[438px] w-[28px] h-[28px]" viewBox="0 0 28 28">
        <path d="M6 7C9 2 17 1 22 6" fill="none" stroke="#000" stroke-width="2"/><path d="M.500 2v10H12z" fill="#000"/>
        <path d="M5 20C9 27 17 27 22 22" fill="none" stroke="#000" stroke-width="2"/><path d="M27 16.500V27L16 16.500z" fill="#000"/>
      </svg>

      <!-- scale bar -->
      <div class="absolute left-[588px] top-[751px] w-[451px]">
        <div class="h-[15px] flex border border-[#555]">
          <div class="flex-1 bg-black"></div><div class="flex-1 bg-white"></div><div class="flex-1 bg-black"></div><div class="flex-1 bg-white"></div>
        </div>
      </div>
      <span class="absolute left-[573px] top-[737px]">0.000</span>
      <span class="absolute left-[796px] top-[737px]">15.000</span>
      <span class="absolute left-[1020px] top-[737px] whitespace-nowrap">30.000 <span class="text-[11px] ml-[1px]">(mm)</span></span>
      <span class="absolute left-[686px] top-[776px]">7.500</span>
      <span class="absolute left-[908px] top-[776px]">22.500</span>
    </div>
  </div>

  <!-- status bar -->
  <div class="h-[23px] bg-[#0272c7] flex items-center text-[13.500px] text-[#cfe4f5] whitespace-nowrap">
    <span class="ml-[1135px] shrink-0">消息窗格</span>
    <span class="ml-[20px] shrink-0">无选择</span>
    <svg class="ml-[24px] w-[10px] h-[6px] shrink-0" viewBox="0 0 10 6"><path d="M5 0l5 6H0z" fill="#e6f1fa"/></svg>
    <span class="ml-[6px] shrink-0">度量标准</span>
    <span class="ml-[7px] shrink-0">(mm、 kg、 N,</span>
  </div>

  <!-- taskbar -->
  <div class="relative h-[54px] bg-[#1a1c1e] border-t border-[#2d4a60] flex items-center">
    <svg class="ml-[358px] w-[27px] h-[27px]" viewBox="0 0 27 27">
      <defs><linearGradient id="win" x1="0" y1="0" x2="1" y2="1"><stop offset="0" stop-color="#7fe1f7"/><stop offset="1" stop-color="#1a8fdc"/></linearGradient></defs>
      <rect width="13" height="13" rx="1" fill="url(#win)"/><rect x="14" width="13" height="13" rx="1" fill="url(#win)"/><rect y="14" width="13" height="13" rx="1" fill="url(#win)"/><rect x="14" y="14" width="13" height="13" rx="1" fill="url(#win)"/>
    </svg>
    <div class="ml-[15px] w-[245px] h-[33px] rounded-full bg-[#f1f3f2] flex items-center overflow-hidden">
      <svg class="ml-[12px] w-[18px] h-[18px]" viewBox="0 0 18 18"><circle cx="7.500" cy="7.500" r="6" fill="none" stroke="#222" stroke-width="1.600"/><path d="M12 12l5 5" stroke="#222" stroke-width="1.800"/></svg>
      <span class="ml-[11px] text-[16px] text-[#555]">搜索</span>
      <svg class="ml-auto w-[58px] h-[33px]" viewBox="0 0 58 33">
        <ellipse cx="22" cy="14" rx="16" ry="10" fill="#f6d49a"/><circle cx="20" cy="16" r="5" fill="#f8b84a"/>
        <path d="M0 28L18 20l14-5 8 1 12 3 6 4v4l-12 6H6z" fill="#8c6a72"/>
        <path d="M0 29c14-5 40-6 58-4v3l-8 5H6z" fill="#6f9a4a"/>
        <path d="M27 7l3 2 3-2M35 10l2 1 2-1" fill="none" stroke="#222" stroke-width="1.400"/>
      </svg>
    </div>
    <svg class="ml-[15px] w-[28px] h-[26px]" viewBox="0 0 28 26"><rect x="9" y="1" width="18" height="17" rx="1" fill="#f1f1f1"/><rect x="1" y="8" width="20" height="17" rx="1" fill="#7d7d7d"/><rect x="9" y="8" width="12" height="10" fill="#b9b9b9"/></svg>
    <svg class="ml-[21px] w-[28px] h-[26px]" viewBox="0 0 28 26"><path d="M0 3h11l3 3h14v20H0z" fill="#f7cf4d"/><path d="M0 3h11l3 3H0z" fill="#d9a72a"/><rect x="5" y="18" width="18" height="8" rx="2" fill="#1378c9"/></svg>
    <svg class="ml-[22px] w-[26px] h-[28px]" viewBox="0 0 26 28"><path d="M1 7h24v17a3 3 0 0 1-3 3H4a3 3 0 0 1-3-3z" fill="#f2f2f2"/><path d="M8 7V4a2 2 0 0 1 2-2h6a2 2 0 0 1 2 2v3" fill="none" stroke="#2ea0dc" stroke-width="1.500"/><rect x="7" y="10" width="5.500" height="5.500" fill="#e5512a"/><rect x="13.500" y="10" width="5.500" height="5.500" fill="#79b82e"/><rect x="7" y="16.500" width="5.500" height="5.500" fill="#2a9de0"/><rect x="13.500" y="16.500" width="5.500" height="5.500" fill="#f2b71c"/></svg>
    <svg class="ml-[23px] w-[28px] h-[30px]" viewBox="0 0 28 30">
      <defs><linearGradient id="gem" x1="0" y1="0" x2="1" y2="1"><stop offset="0" stop-color="#ff3a1f"/><stop offset="0.5" stop-color="#e3131f"/><stop offset="1" stop-color="#c21e72"/></linearGradient></defs>
      <path d="M14 1l13 14-13 14L1 15z" fill="url(#gem)"/><path d="M14 1l13 14H14z" fill="#f5571d"/>
    </svg>
    <div class="relative ml-[22px] w-[30px] h-[32px]">
      <svg class="w-[30px] h-[32px]" viewBox="0 0 30 32"><circle cx="14" cy="17" r="13" fill="#fff" stroke="#1c8fc0" stroke-width="3"/><text x="14" y="24" text-anchor="middle" font-size="20" font-weight="700" fill="#1c8fc0">?</text><circle cx="21" cy="8" r="8" fill="#f6bb21"/></svg>
    </div>
    <svg class="ml-[19px] w-[28px] h-[27px]" viewBox="0 0 28 27">
      <path d="M4 1h14l-3 15H1z" fill="#1e7fa8"/><path d="M11 11h16l-3 15H8z" fill="#2f63e8"/><path d="M11 11h6l-1.500 5H10z" fill="#3fc7ea"/>
    </svg>
    <svg class="ml-[26px] w-[22px] h-[30px]" viewBox="0 0 22 30"><rect y="1" width="22" height="27" rx="1" fill="#63c6e6"/><path d="M4 8h14M4 13h14M4 18h14M4 23h14" stroke="#1e6f93" stroke-width="1.500"/><path d="M2 1v2M6 1v2M10 1v2M14 1v2M18 1v2" stroke="#ddd"/><rect y="26" width="22" height="3" fill="#7a5a3a"/></svg>
    <div class="ml-[23px] w-[27px] h-[28px] bg-black flex flex-col items-center justify-end">
      <svg class="w-[14px] h-[17px]" viewBox="0 0 18 22"><g fill="none" stroke="#c99a3a" stroke-width="1.600"><path d="M9 1l3 2v3l-3 2-3-2V3z"/><path d="M4.500 8l3 2v3l-3 2-3-2v-3z"/><path d="M13.500 8l3 2v3l-3 2-3-2v-3z"/><path d="M9 14l3 2v3l-3 2-3-2v-3z"/></g></svg>
      <span class="text-[9px] leading-[10px] font-bold text-white">WB</span>
    </div>
    <div class="ml-[14px] w-[44px] h-[44px] rounded-[4px] bg-[#2a2c2e] flex items-center justify-center">
      <div class="w-[27px] h-[28px] bg-black flex flex-col items-center justify-end">
        <svg class="w-[17px] h-[18px]" viewBox="0 0 20 22"><circle cx="7" cy="14" r="4" fill="none" stroke="#d69a22" stroke-width="3"/><circle cx="15" cy="6" r="3" fill="none" stroke="#d69a22" stroke-width="2.500"/><circle cx="7" cy="14" r="6.500" fill="none" stroke="#d69a22" stroke-width="1.500" stroke-dasharray="2 2"/><circle cx="15" cy="6" r="5" fill="none" stroke="#d69a22" stroke-width="1.200" stroke-dasharray="2 2"/></svg>
        <span class="text-[9px] leading-[10px] font-bold text-white">M</span>
      </div>
    </div>
    <svg class="ml-[289px] w-[14px] h-[9px]" viewBox="0 0 14 9"><path d="M1 8l6-6 6 6" fill="none" stroke="#f2f2f2" stroke-width="1.600"/></svg>
    <svg class="ml-[21px] w-[14px] h-[20px]" viewBox="0 0 14 20"><rect x="4" y="1" width="6" height="12" rx="3" fill="none" stroke="#dfe6ea" stroke-width="1.300"/><path d="M1.500 9a5.500 5.500 0 0 0 11 0M7 15v4" fill="none" stroke="#dfe6ea" stroke-width="1.300"/></svg>

    <!-- running-app markers -->
    <span class="absolute left-[819px] top-[43px] w-[6px] h-[4px] rounded-full bg-[#8b8d8f]"></span>
    <span class="absolute left-[968px] top-[43px] w-[6px] h-[4px] rounded-full bg-[#8b8d8f]"></span>
    <span class="absolute left-[1017px] top-[43px] w-[6px] h-[4px] rounded-full bg-[#8b8d8f]"></span>
    <span class="absolute left-[1060px] top-[43px] w-[19px] h-[4px] rounded-full bg-[#4cb0ea]"></span>
  </div>
</div>
</body>
</html>
